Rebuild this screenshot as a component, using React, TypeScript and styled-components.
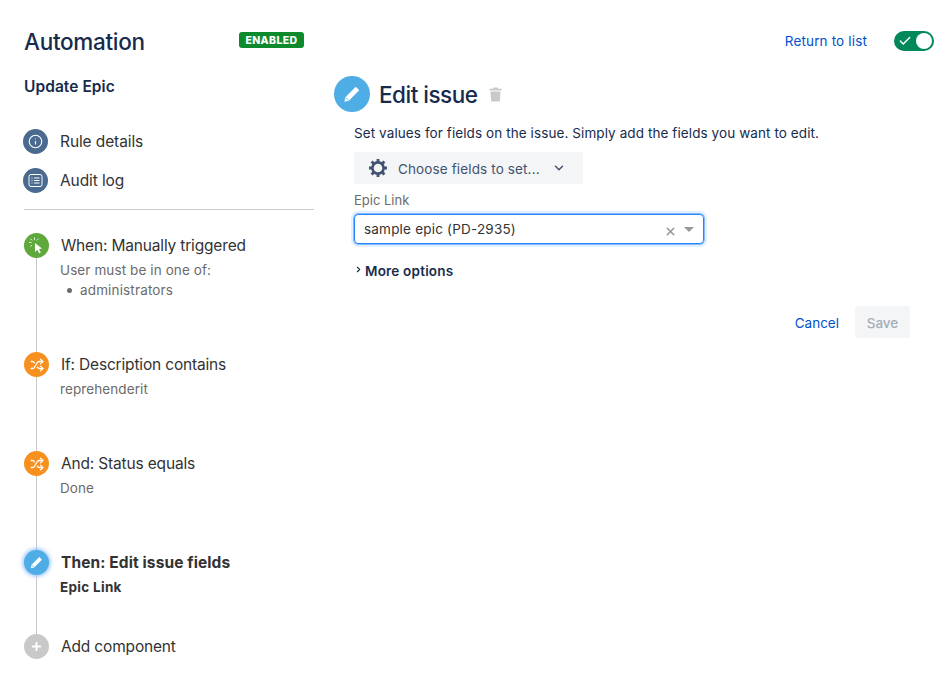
import React from "react";
import styled, { createGlobalStyle } from "styled-components";
import { Shuffle, Plus, Check, X, ChevronDown, ChevronRight, Info } from "lucide-react";

const Global = createGlobalStyle`
  html, body { margin: 0; padding: 0; background: #fff; }
  body { font-family: Inter, "Liberation Sans", sans-serif; color: #333; }
  * { box-sizing: border-box; }
`;

const Page = styled.div`
  width: 949px;
  height: 686px;
  overflow: hidden;
  padding: 0 15px 0 24px;
  display: flex;
  flex-direction: column;
`;

const Header = styled.header`
  height: 74px;
  padding-top: 8px;
  display: flex;
  align-items: center;
  flex: none;
`;
const Title = styled.h1`
  margin: 0;
  width: 215px;
  font-size: 22.5px;
  font-weight: 500;
  letter-spacing: -0.3px;
  color: #172b4d;
`;
const Badge = styled.span`
  background: #0c8a2c;
  color: #fff;
  font-size: 10.5px;
  font-weight: 800;
  letter-spacing: 0.4px;
  height: 16px;
  width: 65px;
  margin-top: -2px;
  border-radius: 3px;
  display: flex;
  align-items: center;
  justify-content: center;
`;
const HeaderRight = styled.div`
  margin-left: auto;
  display: flex;
  align-items: center;
  gap: 27px;
`;
const LinkText = styled.a`
  color: #0052cc;
  font-size: 13.5px;
  font-weight: 400;
  letter-spacing: 0.15px;
`;
const Toggle = styled.div`
  width: 40px;
  height: 20px;
  background: #00875a;
  border-radius: 10px;
  display: flex;
  align-items: center;
  justify-content: space-between;
  padding: 0 2px 0 4px;
`;
const Knob = styled.span`
  width: 16px;
  height: 16px;
  border-radius: 50%;
  background: #fff;
`;

const Body = styled.div`
  display: flex;
  gap: 20px;
  flex: 1;
`;
const Side = styled.aside`
  width: 290px;
  flex: none;
`;
const RuleName = styled.h2`
  margin: 0;
  height: 52px;
  padding-top: 3px;
  font-size: 15.5px;
  line-height: 19px;
  font-weight: 600;
  letter-spacing: 0.05px;
  color: #172b4d;
`;
const NavList = styled.nav`
  display: flex;
  flex-direction: column;
  gap: 14px;
  padding-top: 3px;
  margin-left: -1px;
`;
const NavItem = styled.div`
  display: flex;
  align-items: center;
  gap: 12px;
  height: 25px;
  font-size: 15.5px;
  letter-spacing: -0.1px;
  color: #333;
`;
const NavIcon = styled.span`
  width: 25px;
  height: 25px;
  border-radius: 50%;
  background: #4a6a8f;
  color: #fff;
  display: flex;
  align-items: center;
  justify-content: center;
  flex: none;
`;
const Divider = styled.hr`
  margin: 16px 0 0;
  border: 0;
  height: 1px;
  background: #ccc;
`;
const Steps = styled.div`
  display: flex;
  flex-direction: column;
  padding-top: 23px;
`;
const Step = styled.div<{ $h: number }>`
  display: flex;
  height: ${(p) => p.$h}px;
  gap: 12px;
`;
const Rail = styled.div`
  width: 25px;
  flex: none;
  display: flex;
  flex-direction: column;
  align-items: center;
`;
const Line = styled.span`
  flex: 1;
  width: 1px;
  background: #c9c9c9;
`;
const StepIcon = styled.span<{ $bg: string; $glow?: boolean }>`
  width: 25px;
  height: 25px;
  border-radius: 50%;
  flex: none;
  background: ${(p) => p.$bg};
  color: #fff;
  display: flex;
  align-items: center;
  justify-content: center;
  box-shadow: ${(p) => (p.$glow ? "0 0 4px 1px rgba(76,154,255,.7)" : "none")};
`;
const StepText = styled.div`
  display: flex;
  flex-direction: column;
`;
const StepTitle = styled.div<{ $bold?: boolean }>`
  font-size: 15.5px;
  line-height: 25px;
  letter-spacing: ${(p) => (p.$bold ? "0.1px" : "-0.17px")};
  font-weight: ${(p) => (p.$bold ? 700 : 400)};
  color: #333;
`;
const StepDetail = styled.div<{ $bold?: boolean }>`
  margin-left: -1px;
  margin-top: 2px;
  font-size: 13.5px;
  line-height: 20px;
  letter-spacing: ${(p) => (p.$bold ? "0.3px" : "0.1px")};
  font-weight: ${(p) => (p.$bold ? 700 : 400)};
  color: ${(p) => (p.$bold ? "#333" : "#6b6b6b")};
`;
const Bullets = styled.ul`
  margin: 0 0 0 -1px;
  padding: 0;
  font-size: 13.5px;
  line-height: 20px;
  letter-spacing: 0.15px;
  color: #6b6b6b;
  list-style: none;
`;
const Bullet = styled.li`
  display: flex;
  align-items: center;
  &::before {
    content: "";
    width: 5px;
    height: 5px;
    border-radius: 50%;
    background: #6b6b6b;
    margin: 0 8px 0 7px;
  }
`;

const Main = styled.main`
  flex: 1;
  margin-right: 24px;
  margin-top: 2px;
`;
const EditHead = styled.div`
  display: flex;
  align-items: center;
  height: 36px;
`;
const BigIcon = styled.span`
  width: 36px;
  height: 36px;
  border-radius: 50%;
  background: #4fade6;
  color: #fff;
  display: flex;
  align-items: center;
  justify-content: center;
  margin-right: 9px;
`;
const EditTitle = styled.h2`
  margin: 0 12px 0 0;
  font-size: 22.5px;
  font-weight: 500;
  letter-spacing: -0.5px;
  color: #172b4d;
`;
const Content = styled.div`
  padding-left: 20px;
`;
const Help = styled.p`
  margin: 11px 0 0;
  font-size: 13.5px;
  line-height: 20px;
  letter-spacing: 0.09px;
  color: #172b4d;
`;
const Chooser = styled.button`
  margin-top: 9px;
  width: 229px;
  height: 32px;
  display: flex;
  align-items: center;
  padding: 0 0 0 14px;
  border: 0;
  border-radius: 3px;
  background: #f4f5f7;
  color: #42526e;
  font: 400 13.5px Inter, sans-serif;
  letter-spacing: 0.13px;
`;
const ChooserText = styled.span`
  margin: 0 12px 0 10px;
  padding-top: 2px;
`;
const FieldLabel = styled.label`
  display: block;
  margin-top: 7px;
  font-size: 13px;
  line-height: 18px;
  color: #6b6b6b;
`;
const Select = styled.div`
  margin-top: 5px;
  width: 350px;
  height: 30px;
  border: 1px solid #2684ff;
  border-radius: 4px;
  box-shadow: 0 0 0 0.5px #2684ff, 0 0 0 3px #e4f0ff;
  display: flex;
  align-items: center;
  padding: 0 9px;
  font-size: 13.5px;
  letter-spacing: 0.2px;
  color: #333;
  & svg { margin-top: 4px; }
`;
const SelectValue = styled.span`
  flex: 1;
`;
const Caret = styled.span`
  margin-left: 7px;
  width: 0;
  height: 0;
  border-left: 5px solid transparent;
  border-right: 5px solid transparent;
  border-top: 5px solid #999;
`;
const More = styled.div`
  margin-top: 17px;
  display: flex;
  align-items: center;
  gap: 2px;
  height: 20px;
  font-size: 13.5px;
  font-weight: 600;
  letter-spacing: 0.2px;
  color: #172b4d;
  & svg { margin-top: -4px; }
`;
const Actions = styled.div`
  margin-top: 25px;
  display: flex;
  justify-content: flex-end;
  align-items: center;
  gap: 16px;
  & ${LinkText} {
    letter-spacing: 0;
    padding-top: 2px;
  }
`;
const SaveButton = styled.button`
  width: 55px;
  height: 32px;
  padding: 1px 0 0;
  border: 0;
  border-radius: 3px;
  background: #f4f5f7;
  color: #a5adba;
  font: 500 13.5px Inter, sans-serif;
`;

const Gear = () => (
  <svg width="20" height="20" viewBox="0 0 20 20" fill="none" stroke="#42526e">
    <circle cx="10" cy="10" r="5.6" strokeWidth="2.6" />
    <path strokeWidth="2.8" d="M10 1v3M10 16v3M1 10h3M16 10h3M3.6 3.6l2.2 2.2M14.2 14.2l2.2 2.2M3.6 16.4l2.2-2.2M14.2 5.8l2.2-2.2" />
  </svg>
);
const AuditIcon = () => (
  <svg width="15" height="15" viewBox="0 0 15 15" fill="none" stroke="#fff" strokeWidth="1">
    <rect x="1" y="1.5" width="13" height="12" rx="2" />
    <path d="M3.5 5h1M6 5h5.5M3.5 7.5h1M6 7.5h5.5M3.5 10h1M6 10h5.5" />
  </svg>
);
const ClickIcon = () => (
  <svg width="19" height="19" viewBox="0 0 19 19" fill="none">
    <path d="M8 7l7 5.6-3 .4 1.8 3.6-1.6.8-1.8-3.6L8 16z" fill="#fff" />
    <path d="M7.5 1.5v2.6M2 6.5h2.5M3.4 2.6l1.8 1.8M11.6 2.6l-1.8 1.8M3.4 10.6l1.6-1.6" stroke="#fff" strokeOpacity=".8" strokeWidth="1" />
  </svg>
);
const SolidPencil = ({ s }: { s: number }) => (
  <svg width={s} height={s} viewBox="0 0 16 16">
    <path d="M11 2.2l2.8 2.8-8.3 8.3-3.6.8.8-3.6z" fill="#fff" />
    <path d="M2.9 10.7l2.4 2.4" stroke="#4fade6" strokeWidth=".7" />
  </svg>
);
const TrashIcon = () => (
  <svg width="13" height="15" viewBox="0 0 13 15" fill="#c9c9c9">
    <path d="M4.5 0.5h4l.6 1.2h3.4v1.8H.5V1.7h3.4z" />
    <path d="M1.5 4.5h10l-.6 9.2c0 .5-.4.8-.9.8H3c-.5 0-.9-.3-.9-.8z" />
  </svg>
);

export default function App() {
  return (
    <Page>
      <Global />
      <Header>
        <Title>Automation</Title>
        <Badge>ENABLED</Badge>
        <HeaderRight>
          <LinkText>Return to list</LinkText>
          <Toggle>
            <Check size={14} color="#fff" strokeWidth={2.5} />
            <Knob />
          </Toggle>
        </HeaderRight>
      </Header>
      <Body>
        <Side>
          <RuleName>Update Epic</RuleName>
          <NavList>
            <NavItem>
              <NavIcon><Info size={15} strokeWidth={1.8} /></NavIcon>
              Rule details
            </NavItem>
            <NavItem>
              <NavIcon><AuditIcon /></NavIcon>
              Audit log
            </NavItem>
          </NavList>
          <Divider />
          <Steps>
            <Step $h={119}>
              <Rail>
                <StepIcon $bg="#5fa83c"><ClickIcon /></StepIcon>
                <Line />
              </Rail>
              <StepText>
                <StepTitle>When: Manually triggered</StepTitle>
                <StepDetail>User must be in one of:</StepDetail>
                <Bullets><Bullet>administrators</Bullet></Bullets>
              </StepText>
            </Step>
            <Step $h={99}>
              <Rail>
                <StepIcon $bg="#f7901e"><Shuffle size={14} strokeWidth={2.2} /></StepIcon>
                <Line />
              </Rail>
              <StepText>
                <StepTitle>If: Description contains</StepTitle>
                <StepDetail>reprehenderit</StepDetail>
              </StepText>
            </Step>
            <Step $h={99}>
              <Rail>
                <StepIcon $bg="#f7901e"><Shuffle size={14} strokeWidth={2.2} /></StepIcon>
                <Line />
              </Rail>
              <StepText>
                <StepTitle>And: Status equals</StepTitle>
                <StepDetail>Done</StepDetail>
              </StepText>
            </Step>
            <Step $h={84}>
              <Rail>
                <StepIcon $bg="#4fade6" $glow><SolidPencil s={15} /></StepIcon>
                <Line />
              </Rail>
              <StepText>
                <StepTitle $bold>Then: Edit issue fields</StepTitle>
                <StepDetail $bold>Epic Link</StepDetail>
              </StepText>
            </Step>
            <Step $h={25}>
              <Rail>
                <StepIcon $bg="#c9c9c9"><Plus size={13} strokeWidth={3.5} /></StepIcon>
              </Rail>
              <StepText>
                <StepTitle>Add component</StepTitle>
              </StepText>
            </Step>
          </Steps>
        </Side>
        <Main>
          <EditHead>
            <BigIcon><SolidPencil s={20} /></BigIcon>
            <EditTitle>Edit issue</EditTitle>
            <TrashIcon />
          </EditHead>
          <Content>
            <Help>Set values for fields on the issue. Simply add the fields you want to edit.</Help>
            <Chooser>
              <Gear />
              <ChooserText>Choose fields to set...</ChooserText>
              <ChevronDown size={14} strokeWidth={2.5} />
            </Chooser>
            <FieldLabel>Epic Link</FieldLabel>
            <Select>
              <SelectValue>sample epic (PD-2935)</SelectValue>
              <X size={13} color="#999" strokeWidth={2.8} />
              <Caret />
            </Select>
            <More>
              <ChevronRight size={9} strokeWidth={3} />
              More options
            </More>
            <Actions>
              <LinkText>Cancel</LinkText>
              <SaveButton disabled>Save</SaveButton>
            </Actions>
          </Content>
        </Main>
      </Body>
    </Page>
  );
}
